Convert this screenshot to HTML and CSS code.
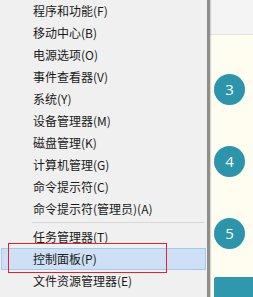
FILE: index.html
```html
<!DOCTYPE html>
<html>
<head>
  <title>控制面板</title>
  <link rel="stylesheet" href="styles.css">
</head>
<body>

<div id="screen">
  <div id="menu">
    <div class="item">程序和功能(F)</div>
    <div class="item">移动中心(B)</div>
    <div class="item">电源选项(O)</div>
    <div class="item">事件查看器(V)</div>
    <div class="item">系统(Y)</div>
    <div class="item">设备管理器(M)</div>
    <div class="item">磁盘管理(K)</div>
    <div class="item">计算机管理(G)</div>
    <div class="item">命令提示符(C)</div>
    <div class="item">命令提示符(管理员)(A)</div>
    <div class="sep"></div>
    <div class="item">任务管理器(T)</div>
    <div class="item active">控制面板(P)</div>
    <div class="item">文件资源管理器(E)</div>

    <div class="mark"></div>
  </div>

  <div id="side">
    <div class="top"></div>
    <div class="steps">
      <div class="step">3</div>
      <div class="step">4</div>
      <div class="step">5</div>
      <div class="button"></div>
    </div>
  </div>
</div>

</body>
</html>
```

FILE: styles.css
```css
body {
  margin: 0;
  padding: 0;
  font-family: "Noto Sans CJK SC", "Noto Sans", sans-serif;
  background-color: #fffdf0;
}

#screen {
  display: flex;
  height: 297px;
  overflow: hidden;
}

#menu {
  position: relative;
  width: 207px;
  flex-shrink: 0;
  background-color: #f0f0f0;
  border-right: 3px solid #8e8e8e;
  box-shadow: 1px 0 1px rgba(0,0,0,0.15);
}

.item {
  height: 22px;
  line-height: 22px;
  padding-left: 33px;
  font-size: 12px;
  color: #1a1a1a;
  white-space: nowrap;
}

.item.active {
  box-sizing: border-box;
  margin: 0 1px 0 1px;
  padding-left: 31px;
  line-height: 20px;
  background-color: #cde0f5;
  border: 1px solid #a9c8ec;
}

.sep {
  height: 1px;
  background-color: #d6d6d6;
  margin: 2px 3px 3px 32px;
}

.mark {
  position: absolute;
  left: 8px;
  top: 243px;
  width: 157px;
  height: 28px;
  border: 1px solid #e0262b;
}

#side {
  flex: 1;
  display: flex;
  flex-direction: column;
  overflow: hidden;
}

.top {
  flex-shrink: 0;
  height: 34px;
  background-color: #f4f4f4;
  border-bottom: 1px solid #e4e4e4;
}

.steps {
  flex: 1;
  display: flex;
  flex-direction: column;
  gap: 41px;
  padding: 39px 0 0 4px;
  background-color: #fffdf0;
}

.step {
  flex-shrink: 0;
  width: 31px;
  height: 31px;
  border-radius: 50%;
  background-color: #2c95ab;
  color: white;
  font-family: "Open Sans", sans-serif;
  font-size: 15px;
  line-height: 31px;
  text-align: center;
}

.button {
  flex-shrink: 0;
  margin-top: -13px;
  height: 30px;
  background-color: #2f98ac;
  border-radius: 2px 0 0 0;
}
```
